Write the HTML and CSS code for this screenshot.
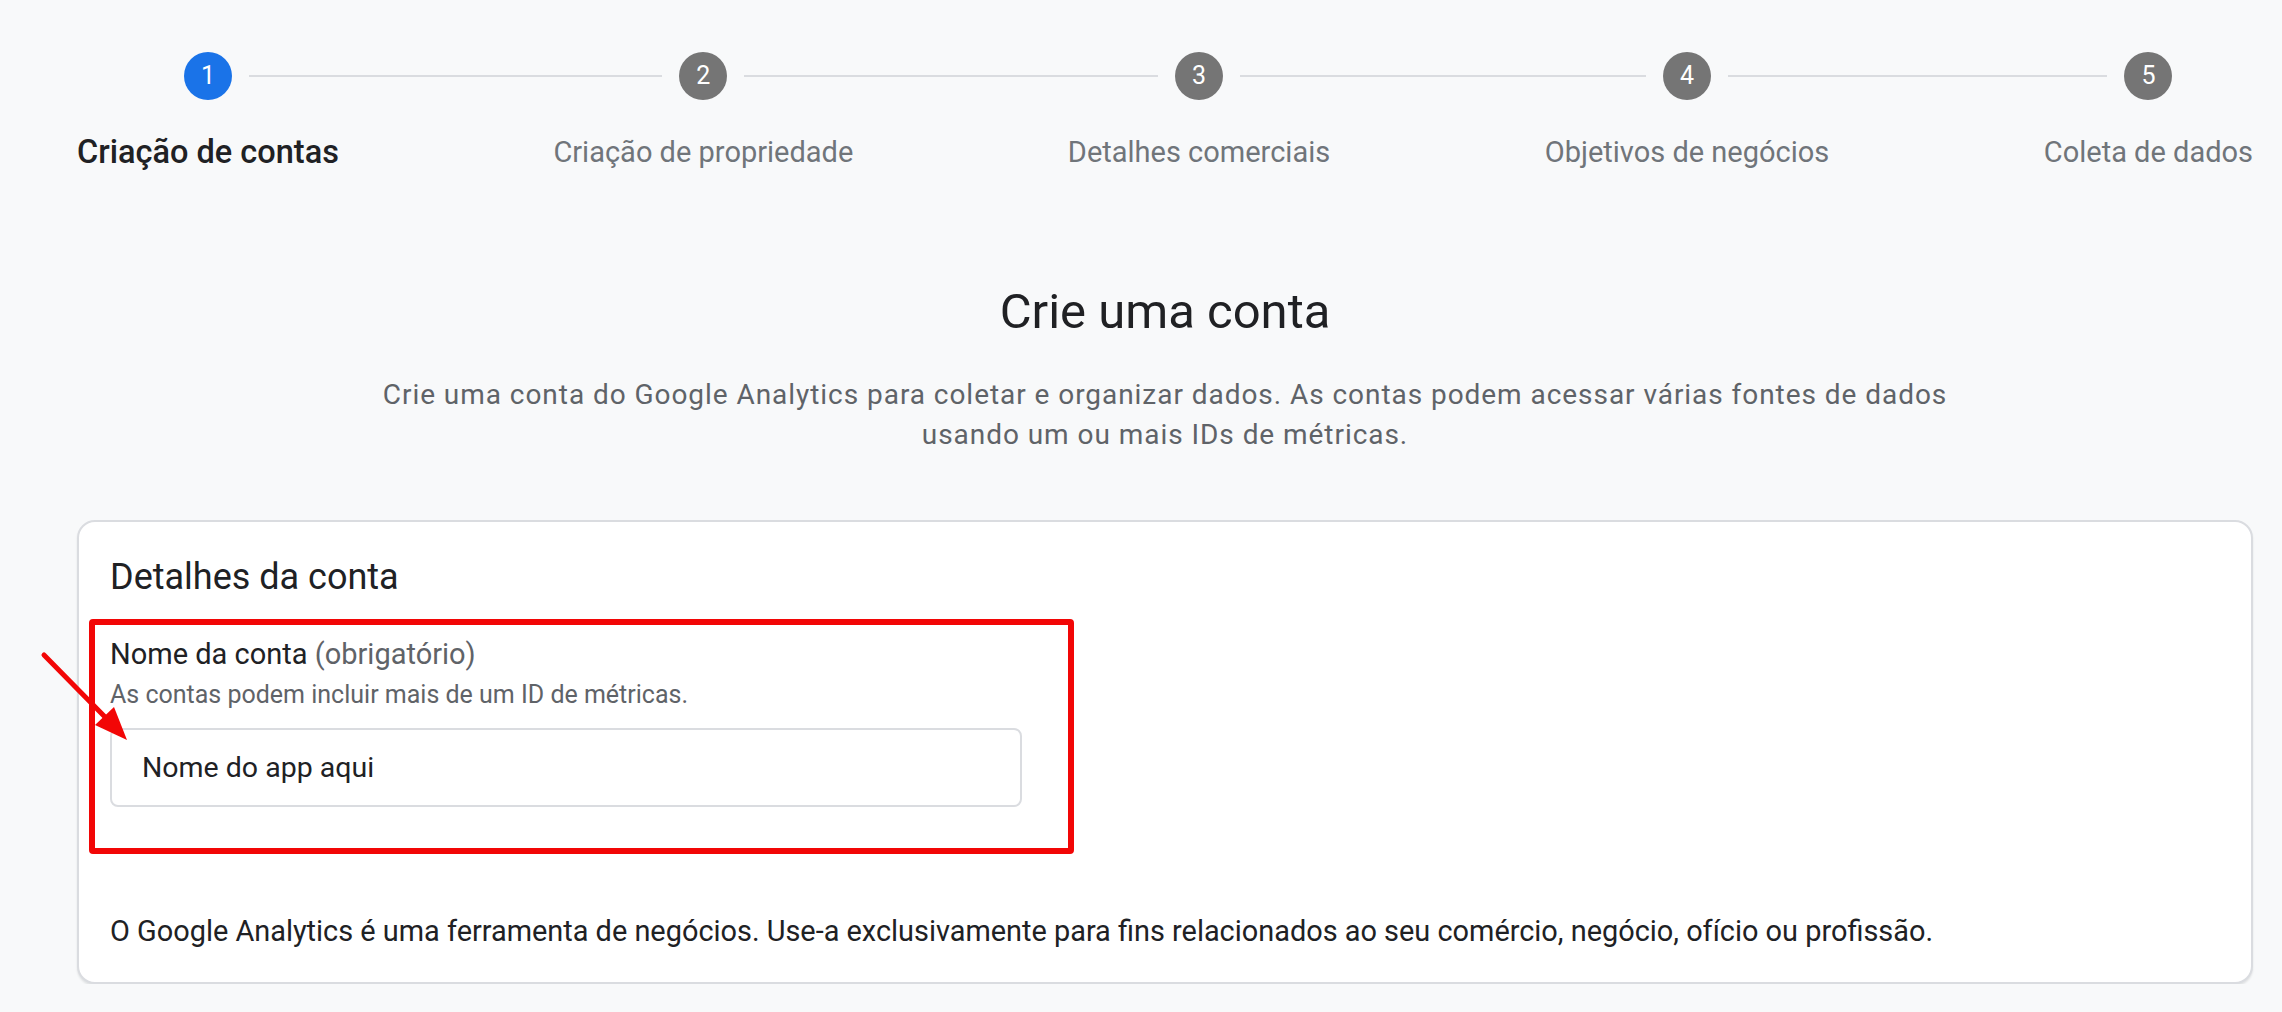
FILE: index.html
```html
<!DOCTYPE html>
<html lang="pt-BR">
<head>
<meta charset="utf-8">
<title>Crie uma conta</title>
<link rel="stylesheet" href="styles.css">
</head>
<body>
<div class="page">
  <nav class="stepper">
    <div class="step step--active step--first">
      <div class="step-head"><span class="seg"></span><span class="circle">1</span><span class="seg"></span></div>
      <div class="step-label">Criação de contas</div>
    </div>
    <span class="connector"></span>
    <div class="step">
      <div class="step-head"><span class="seg"></span><span class="circle">2</span><span class="seg"></span></div>
      <div class="step-label">Criação de propriedade</div>
    </div>
    <span class="connector"></span>
    <div class="step">
      <div class="step-head"><span class="seg"></span><span class="circle">3</span><span class="seg"></span></div>
      <div class="step-label">Detalhes comerciais</div>
    </div>
    <span class="connector"></span>
    <div class="step">
      <div class="step-head"><span class="seg"></span><span class="circle">4</span><span class="seg"></span></div>
      <div class="step-label">Objetivos de negócios</div>
    </div>
    <span class="connector"></span>
    <div class="step step--last">
      <div class="step-head"><span class="seg"></span><span class="circle">5</span><span class="seg"></span></div>
      <div class="step-label">Coleta de dados</div>
    </div>
  </nav>

  <header class="intro">
    <h1 class="title">Crie uma conta</h1>
    <p class="lead">Crie uma conta do Google Analytics para coletar e organizar dados. As contas podem acessar várias fontes de dados usando um ou mais IDs de métricas.</p>
  </header>

  <section class="card">
    <h2 class="card-title">Detalhes da conta</h2>
    <div class="field">
      <label class="field-label" for="account">Nome da conta <span class="muted">(obrigatório)</span></label>
      <div class="field-hint">As contas podem incluir mais de um ID de métricas.</div>
      <input class="text-input" id="account" type="text" value="Nome do app aqui">
      <span class="highlight"></span>
      <svg class="arrow" width="95" height="100" viewBox="0 0 95 100" aria-hidden="true">
        <line x1="4" y1="5" x2="66" y2="68" stroke="#f20606" stroke-width="5" stroke-linecap="round"/>
        <polygon points="87,90 55,75 74,57" fill="#f20606"/>
      </svg>
    </div>
    <p class="note">O Google Analytics é uma ferramenta de negócios. Use-a exclusivamente para fins relacionados ao seu comércio, negócio, ofício ou profissão.</p>
  </section>
</div>
</body>
</html>
```

FILE: styles.css
```css
* { box-sizing: border-box; }

html, body {
  margin: 0;
  padding: 0;
  background: #f8f9fa;
  overflow: hidden;
}

body {
  font-family: Roboto, "Liberation Sans", Arial, sans-serif;
  color: #202124;
}

.page {
  padding: 52px 29px 0 77px;
}

/* ---------- stepper ---------- */
.stepper {
  display: flex;
  align-items: flex-start;
}

.step {
  display: flex;
  flex-direction: column;
  align-items: center;
  flex: 0 0 auto;
}

.step-head {
  display: flex;
  align-items: center;
  width: 100%;
  height: 48px;
}

.seg {
  flex: 1 1 0;
  height: 2px;
  background: #dadce0;
}

.step-head .circle + .seg { margin-left: 17px; }
.step-head .seg:first-child { margin-right: 17px; }

.step--first .seg:first-child,
.step--last .seg:last-child { visibility: hidden; }

.circle {
  flex: 0 0 48px;
  width: 48px;
  height: 48px;
  border-radius: 50%;
  background: #757575;
  color: #fff;
  font-size: 25px;
  line-height: 48px;
  text-align: center;
}

.step--active .circle { background: #1a73e8; }

.step-label {
  margin-top: 32px;
  font-size: 29px;
  line-height: 40px;
  color: #70757a;
  white-space: nowrap;
}

.step--active .step-label {
  font-size: 32.5px;
  color: #202124;
  font-weight: 500;
}

.connector {
  flex: 1 1 0;
  height: 2px;
  margin-top: 23px;
  background: #dadce0;
}

/* ---------- intro ---------- */
.intro {
  display: flex;
  flex-direction: column;
  align-items: center;
  text-align: center;
  margin-top: 112px;
}

.title {
  margin: 0;
  font-size: 49px;
  line-height: 56px;
  font-weight: 400;
  color: #202124;
}

.lead {
  margin: 35px 0 0;
  max-width: 1610px;
  font-size: 28px;
  line-height: 40px;
  letter-spacing: 0.95px;
  color: #5f6368;
}

/* ---------- card ---------- */
.card {
  margin-top: 65px;
  background: #fff;
  border: 2px solid #dadce0;
  border-radius: 18px;
  box-shadow: 0 2px 2px rgba(60, 64, 67, 0.12);
  padding: 31px;
}

.card-title {
  margin: 0;
  font-size: 36px;
  line-height: 48px;
  font-weight: 400;
  color: #202124;
}

.field {
  position: relative;
  margin-top: 33px;
  width: 912px;
}

.field-label {
  display: block;
  font-size: 29px;
  line-height: 40px;
  color: #202124;
}

.muted { color: #5f6368; }

.field-hint {
  margin-top: 5px;
  font-size: 25px;
  line-height: 32px;
  color: #5f6368;
}

.text-input {
  display: block;
  margin-top: 17px;
  width: 912px;
  height: 79px;
  padding: 0 30px;
  border: 2px solid #dadce0;
  border-radius: 8px;
  background: #fff;
  font-family: Roboto, "Liberation Sans", Arial, sans-serif;
  font-size: 28.5px;
  line-height: 40px;
  color: #202124;
  outline: none;
}

.highlight {
  position: absolute;
  left: -21px;
  top: -15px;
  width: 985px;
  height: 235px;
  border: 6px solid #f20606;
  border-radius: 4px;
  pointer-events: none;
}

.arrow {
  position: absolute;
  left: -70px;
  top: 16px;
  overflow: visible;
}

.note {
  margin: 104px 0 0;
  font-size: 28.9px;
  line-height: 40px;
  color: #202124;
}
```
